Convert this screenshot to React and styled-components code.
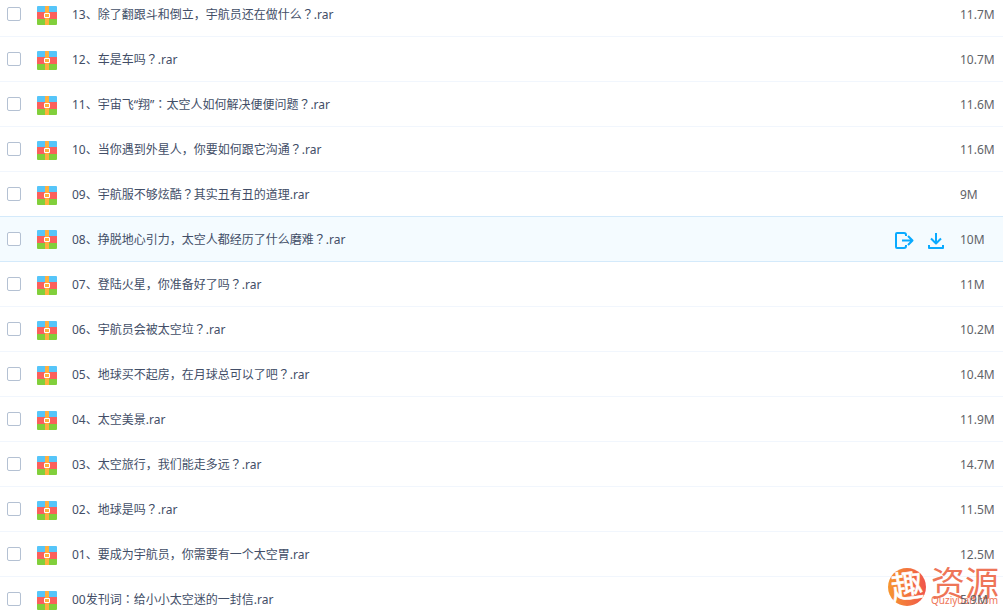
import styled, { createGlobalStyle } from 'styled-components';
import { useState } from 'react';

const GlobalStyle = createGlobalStyle`
  * {
    box-sizing: border-box;
  }
  body {
    margin: 0;
    background-color: #ffffff;
    font-family: 'Noto Sans', 'Noto Sans CJK SC', sans-serif;
    font-size: 12px;
    line-height: 18px;
  }
`;

const Wrapper = styled.main`
  position: relative;
  height: 100vh;
  overflow: hidden;
`;

// the list is scrolled down a little, so its first row starts above the window
const FileList = styled.ul`
  list-style: none;
  margin: -8px 0 0;
  padding: 0;
`;

const Row = styled.li`
  display: flex;
  align-items: center;
  height: ${({ $active }) => ($active ? '46px' : '45px')};
  margin-top: ${({ $active }) => ($active ? '-1px' : '0')};
  padding: ${({ $active }) => ($active ? '1px 0 0 7px' : '2px 0 0 7px')};
  border-bottom: 1px solid ${({ $active }) => ($active ? '#d4eafb' : '#f1f6fd')};
  border-top: ${({ $active }) => ($active ? '1px solid #d4eafb' : 'none')};
  background-color: ${({ $active }) => ($active ? '#f4fbff' : 'transparent')};
`;

const FileLabel = styled.label`
  display: flex;
  align-items: center;
  flex: 1;
  min-width: 0;
  color: #424e67;
  white-space: nowrap;
  cursor: pointer;
`;

const Checkbox = styled.input`
  appearance: none;
  width: 14px;
  height: 14px;
  margin: 0 16px 2px 0;
  border: 1px solid #b4c1d3;
  border-radius: 2px;
  background-color: #ffffff;
  cursor: pointer;
  &:checked {
    background-color: #09aaff;
  }
`;

const RarSvg = styled.svg`
  flex: none;
  width: 20px;
  height: 19px;
  margin: 0 15px 0 0;
`;

// full-width marks stand in the middle of their cell
const Mark = styled.span`
  font-family: 'Noto Sans CJK JP', sans-serif;
  line-height: 12px;
`;

const Actions = styled.div`
  display: flex;
  gap: 12px;
  margin-right: 14px;
`;

const ActionButton = styled.button`
  width: 20px;
  height: 20px;
  margin-top: 2px;
  padding: 0;
  border: none;
  background: none;
  cursor: pointer;
  svg {
    display: block;
  }
`;

const Size = styled.span`
  position: relative;
  z-index: 2;
  width: 43px;
  color: #5f6368;
`;

const Watermark = styled.div`
  position: absolute;
  right: 4px;
  bottom: 3px;
  z-index: 1;
  display: flex;
  align-items: center;
  gap: 4px;
  color: #ee7557;
`;

const WatermarkName = styled.div`
  font-family: 'Noto Sans CJK SC', sans-serif;
  font-size: 34px;
  line-height: 26px;
`;

const WatermarkSite = styled.div`
  font-size: 10px;
  line-height: 10px;
`;

const files = [
  { name: '13、除了翻跟斗和倒立，宇航员还在做什么？.rar', size: '11.7M' },
  { name: '12、车是车吗？.rar', size: '10.7M' },
  { name: '11、宇宙飞“翔”：太空人如何解决便便问题？.rar', size: '11.6M' },
  { name: '10、当你遇到外星人，你要如何跟它沟通？.rar', size: '11.6M' },
  { name: '09、宇航服不够炫酷？其实丑有丑的道理.rar', size: '9M' },
  { name: '08、挣脱地心引力，太空人都经历了什么磨难？.rar', size: '10M' },
  { name: '07、登陆火星，你准备好了吗？.rar', size: '11M' },
  { name: '06、宇航员会被太空垃？.rar', size: '10.2M' },
  { name: '05、地球买不起房，在月球总可以了吧？.rar', size: '10.4M' },
  { name: '04、太空美景.rar', size: '11.9M' },
  { name: '03、太空旅行，我们能走多远？.rar', size: '14.7M' },
  { name: '02、地球是吗？.rar', size: '11.5M' },
  { name: '01、要成为宇航员，你需要有一个太空胃.rar', size: '12.5M' },
  { name: '00发刊词：给小小太空迷的一封信.rar', size: '5.9M' },
];

const RarIcon = () => (
  <RarSvg viewBox="0 0 20 19" aria-hidden="true">
    <path d="M1 0h18a1 1 0 0 1 1 1v5H0V1a1 1 0 0 1 1-1z" fill="#56c5f9" />
    <path d="M0 6h20v7H0z" fill="#fb5f5c" />
    <path d="M0 13h20v5a1 1 0 0 1-1 1H1a1 1 0 0 1-1-1z" fill="#81cf3b" />
    <path d="M8 0h4v19H8z" fill="#ffb03c" />
    <path d="M7.5 7.5h5v4h-5z" fill="#ffb03c" stroke="#ffffff" />
  </RarSvg>
);

const ShareIcon = () => (
  <svg
    width="20"
    height="20"
    viewBox="0 0 20 20"
    fill="none"
    stroke="#09aaff"
    strokeWidth="2"
    strokeLinejoin="round"
  >
    <path d="M12 5V4a2 2 0 0 0-2-2H3a1 1 0 0 0-1 1v13a1 1 0 0 0 1 1h7a2 2 0 0 0 2-2v-1" />
    <path d="M8 9.500h10M14 5l4.500 4.500L14 14" />
  </svg>
);

const DownloadIcon = () => (
  <svg
    width="20"
    height="20"
    viewBox="0 0 20 20"
    fill="none"
    stroke="#09aaff"
    strokeWidth="2"
    strokeLinejoin="round"
  >
    <path d="M10 2v10M5 7.500l5 5 5-5M3 14v3h14v-3" />
  </svg>
);

const Logo = () => (
  <svg width="40" height="40" viewBox="0 0 40 40" aria-hidden="true">
    <defs>
      <linearGradient id="logo" x1="0" y1="0" x2="1" y2="0">
        <stop offset="0" stopColor="#f6962f" />
        <stop offset="1" stopColor="#f0554c" />
      </linearGradient>
    </defs>
    <circle cx="20" cy="20" r="19" fill="url(#logo)" />
    <text
      x="20"
      y="31"
      textAnchor="middle"
      transform="rotate(-8 20 20)"
      fontFamily="Noto Sans CJK SC, sans-serif"
      fontSize="32"
      fill="#ffffff"
      stroke="#ffffff"
      strokeWidth="0.6"
      strokeLinejoin="round"
    >
      趣
    </text>
  </svg>
);

const FileRow = ({ file, isActive, onSelect }) => {
  const [checked, setChecked] = useState(false);

  return (
    <Row $active={isActive} onClick={onSelect}>
      <FileLabel>
        <Checkbox
          type="checkbox"
          checked={checked}
          onChange={(e) => setChecked(e.target.checked)}
        />
        <RarIcon />
        <span>
          {file.name.split(/([？：])/).map((part, index) => {
            return index % 2 ? <Mark key={index}>{part}</Mark> : part;
          })}
        </span>
      </FileLabel>
      {isActive && (
        <Actions>
          <ActionButton type="button" aria-label="分享">
            <ShareIcon />
          </ActionButton>
          <ActionButton type="button" aria-label="下载">
            <DownloadIcon />
          </ActionButton>
        </Actions>
      )}
      <Size>{file.size}</Size>
    </Row>
  );
};

const App = () => {
  const [active, setActive] = useState(5);

  return (
    <Wrapper>
      <GlobalStyle />
      <FileList>
        {files.map((file, index) => (
          <FileRow
            key={file.name}
            file={file}
            isActive={index === active}
            onSelect={() => setActive(index)}
          />
        ))}
      </FileList>
      <Watermark>
        <Logo />
        <div>
          <WatermarkName>资源</WatermarkName>
          <WatermarkSite>Quziyuan.com</WatermarkSite>
        </div>
      </Watermark>
    </Wrapper>
  );
};

export default App;
